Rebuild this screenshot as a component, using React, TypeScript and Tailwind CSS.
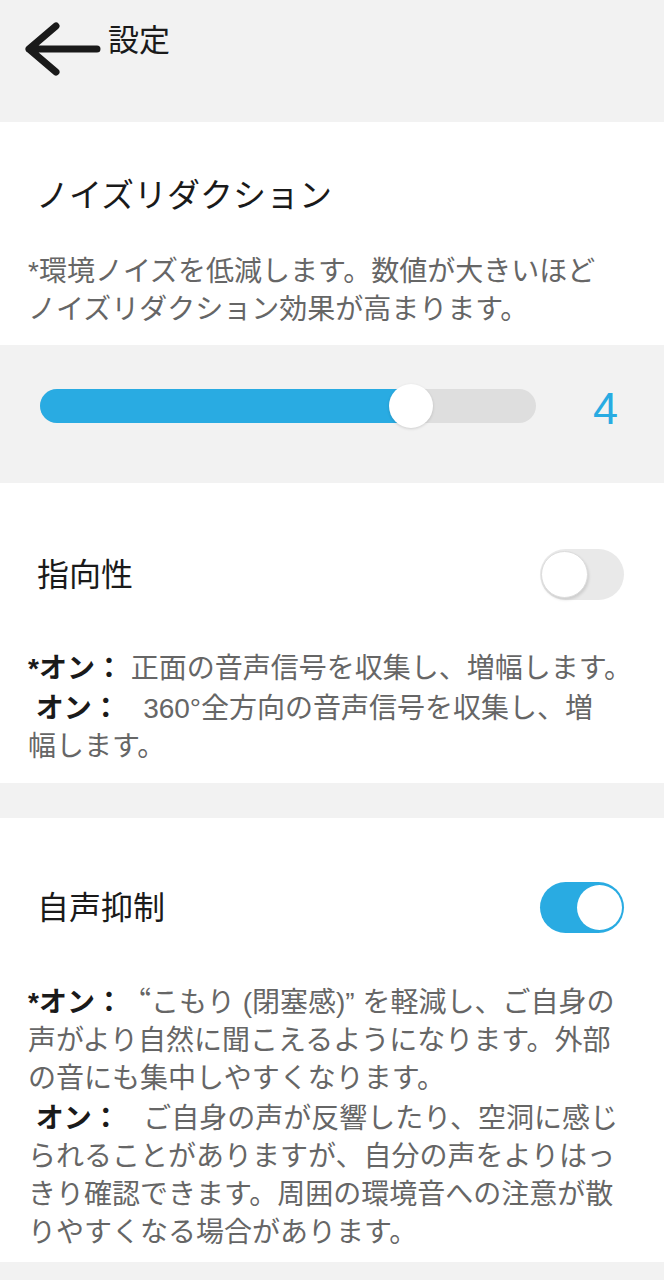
import React from 'react';

const jp = "font-['Liberation_Sans','Noto_Sans_CJK_JP',sans-serif]";

function Toggle({ on }: { on: boolean }) {
  if (on) {
    return (
      <div className="w-[84px] h-[51px] rounded-full bg-[#29abe2] flex items-center justify-end pr-[2px]">
        <div className="w-[45px] h-[45px] rounded-full bg-white" />
      </div>
    );
  }
  return (
    <div className="w-[84px] h-[51px] rounded-full bg-[#e9e9e9] flex items-center pl-[1px]">
      <div className="w-[47px] h-[47px] rounded-full bg-white border border-[#dcdcdc] shadow-[1px_2px_3px_rgba(0,0,0,0.12)]" />
    </div>
  );
}

function Label({ star, children }: { star?: boolean; children: React.ReactNode }) {
  return (
    <span className="font-bold text-[#1a1a1a]">
      {star ? '*' : '\u00a0'}
      {children}
    </span>
  );
}

export default function App() {
  return (
    <div className={`min-h-screen bg-[#f2f2f2] ${jp}`}>
      {/* header */}
      <div className="h-[122px] flex items-start pt-[22px] pl-[24px]">
        <svg width="78" height="56" viewBox="0 0 78 56" fill="none">
          <path
            d="M32 4 L5 27 L32 50 M5 27 L73 27"
            stroke="#1a1a1a"
            strokeWidth="7"
            strokeLinecap="round"
            strokeLinejoin="round"
          />
        </svg>
        <span className="ml-[6px] text-[31px] leading-[38px] text-[#1a1a1a]">設定</span>
      </div>

      {/* noise reduction */}
      <div className="bg-white pt-[54px] pb-[16px]">
        <div className="pl-[36px] text-[33px] leading-[40px] text-[#1a1a1a]">ノイズリダクション</div>
        <div className="mt-[37px] pl-[28px] text-[28px] leading-[38px] text-[#666666]">
          *環境ノイズを低減します。数値が大きいほど
          <br />
          ノイズリダクション効果が高まります。
        </div>
      </div>

      {/* slider */}
      <div className="h-[138px] pt-[39px] pl-[40px] pr-[46px] flex items-start">
        <div className="relative w-[496px] h-[44px] flex items-center">
          <div className="w-full h-[34px] rounded-full bg-[#dedede] overflow-hidden">
            <div className="h-full w-[370px] bg-[#29abe2]" />
          </div>
          <div className="absolute left-[349px] top-0 w-[44px] h-[44px] rounded-full bg-white shadow-[0_1px_3px_rgba(0,0,0,0.15)]" />
        </div>
        <div className="ml-auto h-[44px] flex items-center">
          <span className="text-[45px] leading-none text-[#29abe2] font-['Liberation_Sans',sans-serif] pt-[4px]">4</span>
        </div>
      </div>

      {/* directivity */}
      <div className="bg-white pt-[66px] pb-[17px]">
        <div className="flex items-center justify-between pl-[37px] pr-[40px] h-[51px]">
          <span className="text-[32px] leading-[40px] text-[#1a1a1a]">指向性</span>
          <Toggle on={false} />
        </div>
        <div className="mt-[50px] pl-[28px] text-[28px] leading-[38px] text-[#666666]">
          <p>
            <Label star>オン：</Label> 正面の音声信号を収集し、増幅します。
          </p>
          <p className="mt-[2px]">
            <Label>オン：</Label>
            {'\u00a0\u00a0\u00a0'}360°全方向の音声信号を収集し、増
            <br />
            幅します。
          </p>
        </div>
      </div>

      <div className="h-[35px]" />

      {/* own voice suppression */}
      <div className="bg-white pt-[64px] pb-[10px]">
        <div className="flex items-center justify-between pl-[37px] pr-[40px] h-[51px]">
          <span className="text-[32px] leading-[40px] text-[#1a1a1a]">自声抑制</span>
          <Toggle on />
        </div>
        <div className="mt-[48px] pl-[28px] text-[28px] leading-[38px] text-[#666666]">
          <p>
            <Label star>オン：</Label>
            <span className="font-['Noto_Sans_CJK_JP',sans-serif] [font-feature-settings:'fwid']">“</span>
            こもり (閉塞感)” を軽減し、ご自身の
            <br />
            声がより自然に聞こえるようになります。外部
            <br />
            の音にも集中しやすくなります。
          </p>
          <p className="mt-[2px]">
            <Label>オン：</Label>
            {'\u00a0\u00a0\u00a0'}ご自身の声が反響したり、空洞に感じ
            <br />
            られることがありますが、自分の声をよりはっ
            <br />
            きり確認できます。周囲の環境音への注意が散
            <br />
            りやすくなる場合があります。
          </p>
        </div>
      </div>
    </div>
  );
}
